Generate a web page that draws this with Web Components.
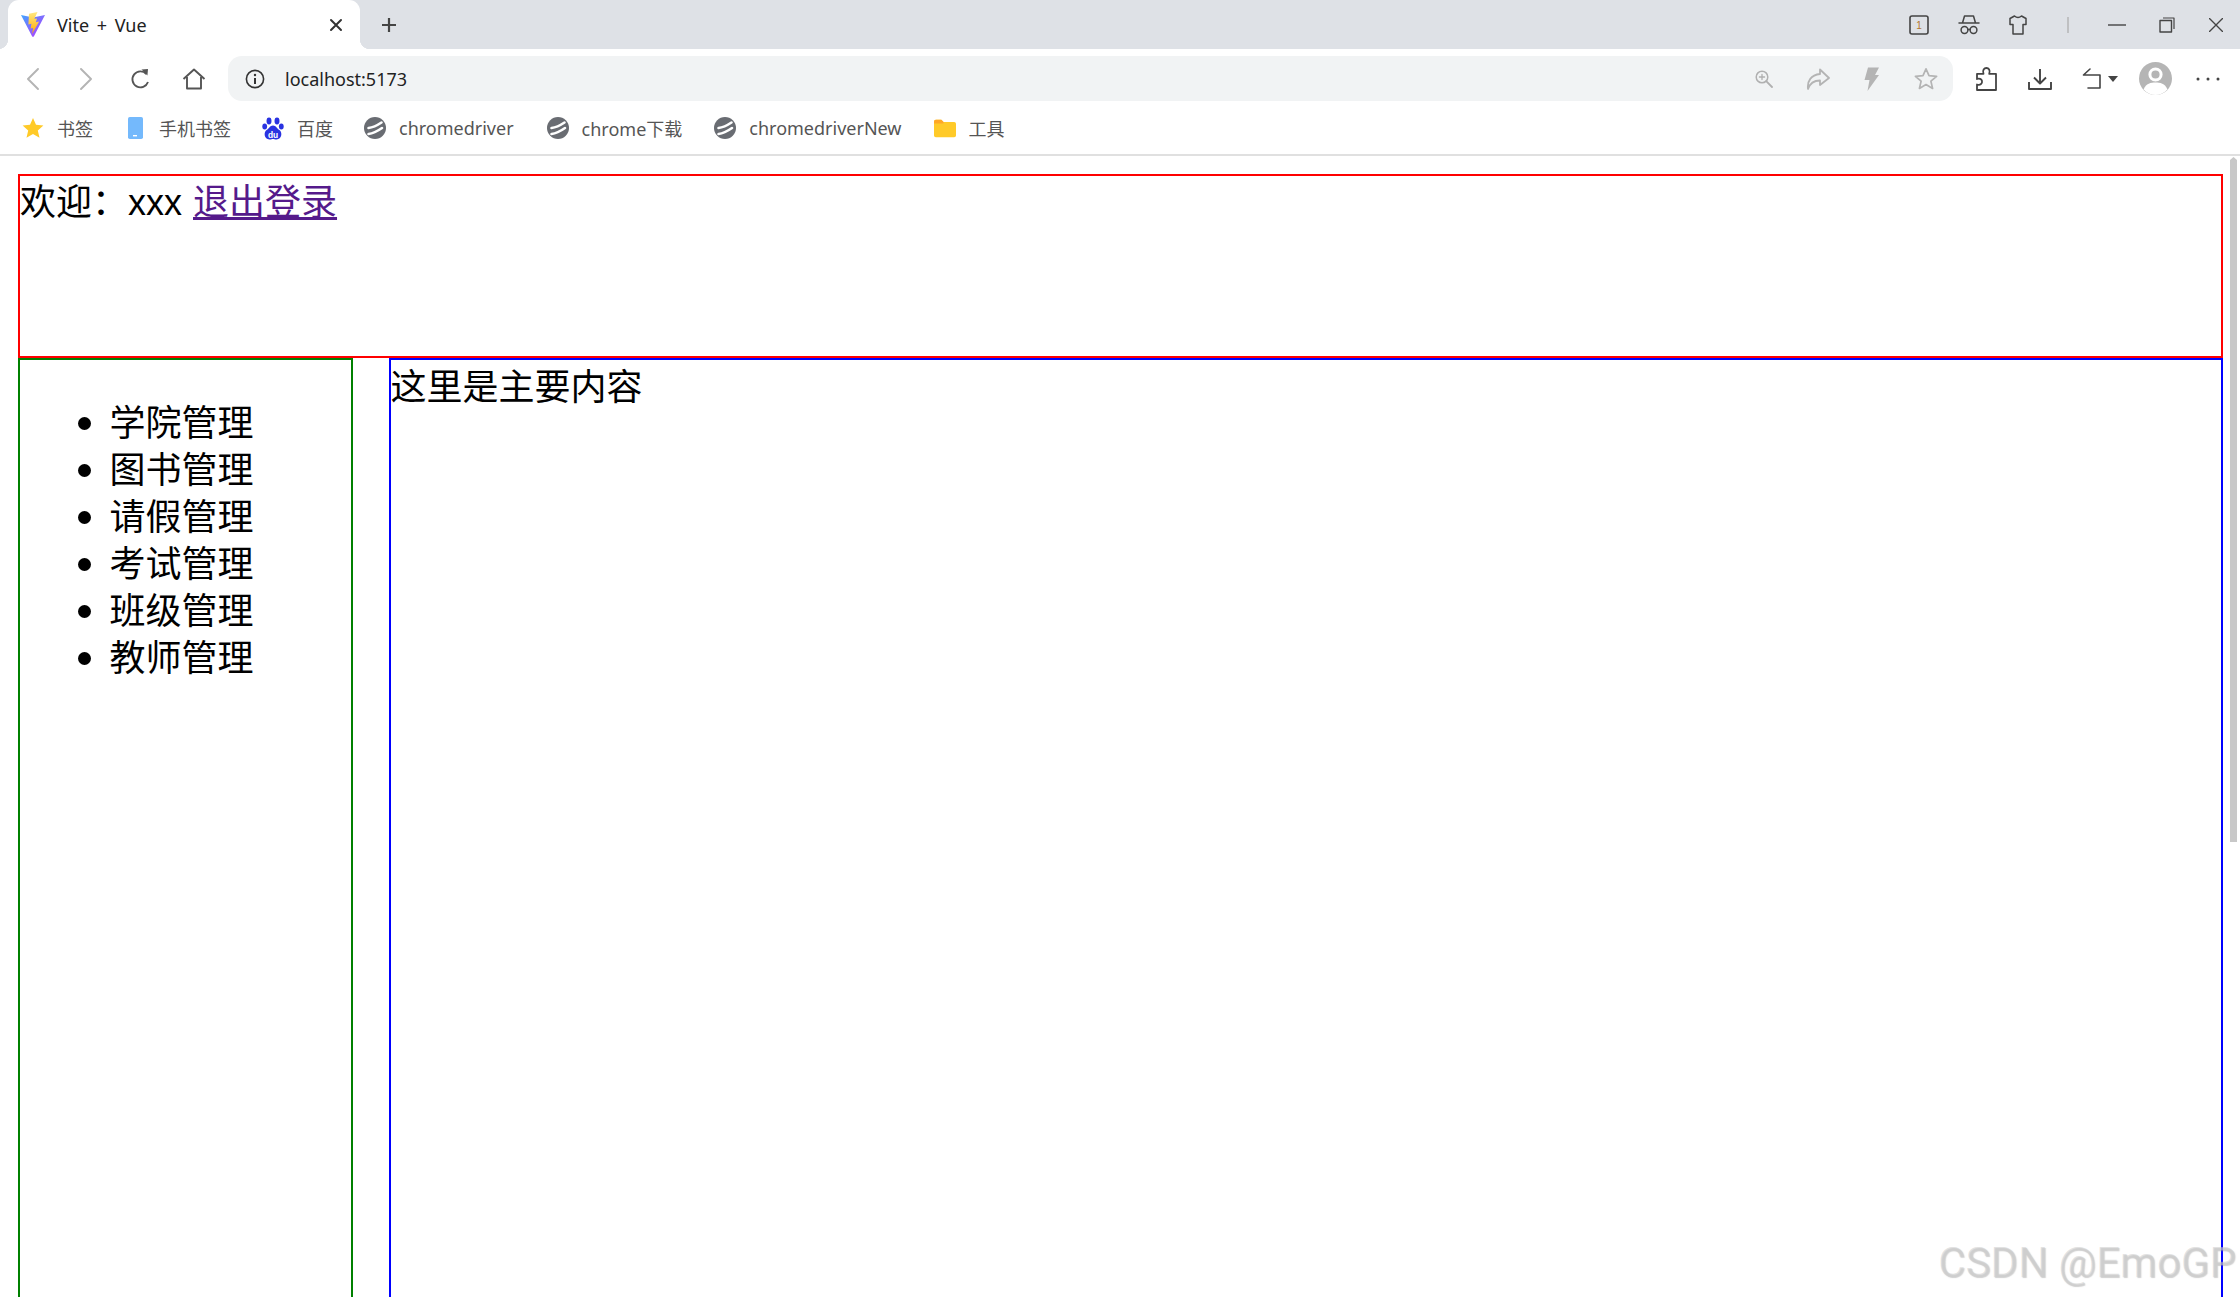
<!DOCTYPE html>
<html>
<head>
<meta charset="utf-8">
<title>Vite + Vue</title>
<style>
  html, body { margin: 0; height: 100%; overflow: hidden; background: #fff; }
  body { display: flex; flex-direction: column; font-family: "Liberation Sans", "Noto Sans CJK SC", sans-serif; }
</style>
</head>
<body>
<browser-tabs title-text="Vite + Vue"></browser-tabs>
<browser-toolbar url="localhost:5173"></browser-toolbar>
<bookmark-bar>
  <book-mark icon="star" label="书签"></book-mark>
  <book-mark icon="phone" label="手机书签"></book-mark>
  <book-mark icon="baidu" label="百度"></book-mark>
  <book-mark icon="globe" label="chromedriver"></book-mark>
  <book-mark icon="globe" label="chrome下载" style="margin-left:2px"></book-mark>
  <book-mark icon="globe" label="chromedriverNew" style="margin-left:1px"></book-mark>
  <book-mark icon="folder" label="工具" style="margin-left:1px"></book-mark>
</bookmark-bar>
<page-view>
  <page-header>欢迎：xxx <a href="#">退出登录</a></page-header>
  <side-menu>
    <li>学院管理</li>
    <li>图书管理</li>
    <li>请假管理</li>
    <li>考试管理</li>
    <li>班级管理</li>
    <li>教师管理</li>
  </side-menu>
  <main-panel>这里是主要内容</main-panel>
</page-view>
<water-mark>CSDN @EmoGP</water-mark>

<script>
const UI_FONT = `"Noto Sans", "Noto Sans CJK SC", sans-serif`;

function svg(w, h, body, vb) {
  return `<svg width="${w}" height="${h}" viewBox="${vb || `0 0 ${w} ${h}`}" fill="none" stroke-linecap="round" stroke-linejoin="round">${body}</svg>`;
}

const ICONS = {
  vite: svg(24, 25, `
    <defs>
      <linearGradient id="vg" x1="0" y1="0" x2="1" y2="1"><stop offset="0" stop-color="#41a5ff"/><stop offset="1" stop-color="#bd34fe"/></linearGradient>
      <linearGradient id="bg" x1="0" y1="0" x2="0" y2="1"><stop offset="0" stop-color="#ffea83"/><stop offset="1" stop-color="#ffa800"/></linearGradient>
    </defs>
    <path d="M0 3 L12 5.5 L24 3 L12.8 24.4 Q12 25 11.2 24.4 Z" fill="url(#vg)"/>
    <path d="M16.5 0 L8 1.8 L7.4 12.5 L10.4 11.8 L9.6 16.6 L12.2 15.9 L11 22 L18.2 9.5 L14.8 10.2 L16 6.4 L13.4 6.8 Z" fill="url(#bg)"/>`),
  close: svg(14, 14, `<path d="M2 2 L12 12 M12 2 L2 12" stroke="#333" stroke-width="2"/>`),
  plus: svg(16, 16, `<path d="M8 1 V15 M1 8 H15" stroke="#444" stroke-width="2.2" stroke-linecap="butt"/>`),
  tabcount: `<svg width="20" height="20" viewBox="0 0 20 20" fill="none"><rect x="1" y="1" width="18" height="18" rx="2" stroke="#444" stroke-width="1.6"/><text x="10" y="14" font-size="10" text-anchor="middle" fill="#b5752c" font-family="Liberation Sans">1</text></svg>`,
  spy: svg(22, 20, `<path d="M1 8 H21 M4.5 8 L6.5 1 H15.5 L17.5 8" stroke="#444" stroke-width="1.5"/><circle cx="6.5" cy="15" r="3.4" stroke="#444" stroke-width="1.5"/><circle cx="15.5" cy="15" r="3.4" stroke="#444" stroke-width="1.5"/><path d="M9.9 14.5 H12.1" stroke="#444" stroke-width="1.3"/>`),
  shirt: svg(18, 20, `<path d="M5.5 1 L1 3.5 V9.5 H4 V19 H14 V9.5 H17 V3.5 L12.5 1 Q9 4 5.5 1 Z" stroke="#444" stroke-width="1.5"/>`),
  sep: svg(2, 16, `<path d="M1 0 V16" stroke="#aaa" stroke-width="1.2" stroke-linecap="butt"/>`),
  min: svg(18, 2, `<path d="M0 1 H18" stroke="#444" stroke-width="1.4" stroke-linecap="butt"/>`),
  max: svg(16, 16, `<rect x="1" y="3.5" width="11.5" height="11.5" stroke="#444" stroke-width="1.4"/><path d="M4 1 H15 V12" stroke="#444" stroke-width="1.2" stroke-linecap="butt"/>`),
  winclose: svg(14, 14, `<path d="M0.5 0.5 L13.5 13.5 M13.5 0.5 L0.5 13.5" stroke="#444" stroke-width="1.4"/>`),
  back: svg(13, 22, `<path d="M12 1 L2 11 L12 21" stroke="#b4b4b4" stroke-width="1.9"/>`),
  forward: svg(13, 22, `<path d="M1 1 L11 11 L1 21" stroke="#b4b4b4" stroke-width="1.9"/>`),
  reload: svg(20, 22, `<path d="M16.4 6 A8 8 0 1 0 18 14" stroke="#555" stroke-width="1.9" stroke-linecap="butt"/><path d="M11.5 1.5 L18 1 L17.4 7.4 Z" fill="#555"/>`),
  home: svg(24, 22, `<path d="M1.5 11 L12 1.5 L22.5 11 M5 9 V20.5 H19 V9" stroke="#555" stroke-width="1.9" stroke-linecap="butt"/>`),
  info: svg(20, 20, `<circle cx="10" cy="10" r="8.6" stroke="#333" stroke-width="1.6"/><path d="M10 9 V15" stroke="#333" stroke-width="2" stroke-linecap="butt"/><circle cx="10" cy="6" r="1.2" fill="#333"/>`),
  zoom: svg(18, 18, `<circle cx="7" cy="7" r="5.8" stroke="#b0b0b0" stroke-width="1.5"/><path d="M4.4 7 H9.6 M7 4.4 V9.6" stroke="#b0b0b0" stroke-width="1.3"/><path d="M11.2 11.2 L17 17" stroke="#b0b0b0" stroke-width="1.8"/>`),
  share: svg(24, 22, `<path d="M14 1.5 L23 10 L14 17 V12.5 C8 12.5 4 15 2 21 C1 13 5 7 14 6 Z" stroke="#b4b4b4" stroke-width="1.8"/>`),
  bolt: svg(16, 24, `<path d="M4 0.5 H15 L11 8 H15 L3.5 24 L5.5 13 H0.5 Z" fill="#b4b4b4"/>`),
  bstar: svg(24, 23, `<path d="M12 1.8 L15 8.6 L22.6 9.3 L16.9 14.2 L18.6 21.4 L12 17.6 L5.4 21.4 L7.1 14.2 L1.4 9.3 L9 8.6 Z" stroke="#b4b4b4" stroke-width="1.7"/>`),
  puzzle: svg(21, 24, `<path d="M1 23 V17.5 C4.5 18.5 6.5 16.5 6 14 C5.6 12 3 11 1 12 V6.8 H7.5 C6.2 3 8.2 1 10.4 1 C12.6 1 14.6 3 13.2 6.8 H20 V23 Z" stroke="#444" stroke-width="1.8"/>`),
  download: svg(24, 22, `<path d="M12 1 V15 M6 9.5 L12 15.5 L18 9.5 M1 14 V21 H23 V14" stroke="#444" stroke-width="1.9" stroke-linecap="butt"/>`),
  undo: `<span style="display:inline-flex;align-items:center;gap:6px">${svg(20, 22, `<path d="M8 1 L1.5 7 H18 V20 H6" stroke="#444" stroke-width="1.6"/>`)}${svg(10, 6, `<path d="M0 0 H10 L5 6 Z" fill="#444"/>`)}</span>`,
  avatar: svg(33, 33, `<circle cx="16.5" cy="16.5" r="16.5" fill="#b5b5b5"/><circle cx="16.5" cy="12.5" r="5.6" stroke="#fff" stroke-width="3" fill="#b5b5b5"/><path d="M4.5 27.5 C7 21.5 12 20.6 16.5 20.6 C21 20.6 26 21.5 28.5 27.5 C25.5 31 21 33 16.5 33 C12 33 7.5 31 4.5 27.5 Z" fill="#fff"/>`),
  dots: svg(24, 4, `<circle cx="2" cy="2" r="1.5" fill="#444"/><circle cx="12" cy="2" r="1.5" fill="#444"/><circle cx="22" cy="2" r="1.5" fill="#444"/>`),
  star: svg(22, 22, `<path d="M11 1 L14 7.8 L21.4 8.5 L15.8 13.4 L17.5 20.7 L11 16.9 L4.5 20.7 L6.2 13.4 L0.6 8.5 L8 7.8 Z" fill="#ffca28"/>`),
  phone: svg(22, 22, `<rect x="4" y="0" width="15" height="22" rx="1.8" fill="#74b9fc"/><rect x="9" y="18" width="4" height="1.4" fill="#fff"/>`),
  baidu: svg(22, 23, `<g fill="#2932e1"><ellipse cx="7" cy="4" rx="2.5" ry="3.4"/><ellipse cx="15" cy="4" rx="2.5" ry="3.4"/><ellipse cx="2.7" cy="9.4" rx="2.4" ry="3"/><ellipse cx="19.3" cy="9.4" rx="2.4" ry="3"/><path d="M11 8.4 C14 8.4 15 11.5 17.4 13 C20.8 15.4 19.8 22.6 14.4 22.4 C12.8 22.3 12 21.9 11 21.9 C10 21.9 9.2 22.3 7.6 22.4 C2.2 22.6 1.2 15.4 4.6 13 C7 11.5 8 8.4 11 8.4 Z"/></g><text x="11" y="20.6" font-size="8.4" font-weight="700" text-anchor="middle" fill="#fff" font-family="Liberation Sans">du</text>`),
  globe: svg(22, 22, `<circle cx="11" cy="11" r="11" fill="#696c72"/><path d="M4.5 11 C9 10.5 13 8.5 17.5 5.5 M4.5 17 C9 16.5 13 14.5 18 11" stroke="#fff" stroke-width="2.6"/>`),
  folder: svg(24, 19, `<path d="M0 2 Q0 0 2 0 H8 L10.4 2.4 H22 Q24 2.4 24 4.4 V17 Q24 19 22 19 H2 Q0 19 0 17 Z" fill="#ffca28"/><path d="M0 2 Q0 0 2 0 H8 L10.4 2.4 V4 H0 Z" fill="#ffa726"/>`)
};

class BrowserTabs extends HTMLElement {
  constructor() {
    super();
    this.attachShadow({ mode: "open" });
    this.shadowRoot.innerHTML = `
      <style>
        :host { display: flex; flex: none; align-items: stretch; height: 49px; background: #dee1e6; font: 18px ${UI_FONT}; color: #222; overflow: hidden; }
        .tab { position: relative; width: 352px; margin-left: 8px; background: #fff; border-radius: 11px 11px 0 0; display: flex; align-items: center; padding: 0 17px 0 13px; box-sizing: border-box; }
        .tab::before, .tab::after { content: ""; position: absolute; bottom: 0; width: 10px; height: 10px; }
        .tab::before { left: -10px; background: radial-gradient(circle at 0 0, transparent 10px, #fff 10.5px); }
        .tab::after { right: -10px; background: radial-gradient(circle at 100% 0, transparent 10px, #fff 10.5px); }
        .favicon { display: flex; margin-right: 12px; }
        .label { flex: 1; word-spacing: 3px; }
        .x { display: flex; }
        .new { display: flex; align-items: center; margin-left: 21px; }
        .spacer { flex: 1; }
        .btn { display: flex; align-items: center; justify-content: center; width: 49.5px; }
        .btn:last-child { margin-right: -1px; }
      </style>
      <div class="tab">
        <span class="favicon">${ICONS.vite}</span>
        <span class="label">${this.getAttribute("title-text")}</span>
        <span class="x">${ICONS.close}</span>
      </div>
      <div class="new">${ICONS.plus}</div>
      <div class="spacer"></div>
      <div class="btn">${ICONS.tabcount}</div>
      <div class="btn">${ICONS.spy}</div>
      <div class="btn">${ICONS.shirt}</div>
      <div class="btn">${ICONS.sep}</div>
      <div class="btn">${ICONS.min}</div>
      <div class="btn">${ICONS.max}</div>
      <div class="btn">${ICONS.winclose}</div>
    `;
  }
}

class BrowserToolbar extends HTMLElement {
  constructor() {
    super();
    this.attachShadow({ mode: "open" });
    this.shadowRoot.innerHTML = `
      <style>
        :host { display: flex; flex: none; align-items: center; height: 59px; padding: 0 1px 0 5px; background: #fff; box-sizing: border-box; font: 18px ${UI_FONT}; color: #222; }
        .btn { display: flex; align-items: center; justify-content: center; width: 54px; flex: none; height: 45px; }
        .address { flex: 1; display: flex; align-items: center; height: 45px; margin: 0 6px 0 7px; background: #f1f3f4; border-radius: 14px; }
        .info { display: flex; margin: 0 20px 0 17px; }
        .url { flex: 1; }
        .w66 { width: 66px; }
        .w44 { width: 44px; }
        .w62 { width: 62px; }
      </style>
      <div class="btn">${ICONS.back}</div>
      <div class="btn">${ICONS.forward}</div>
      <div class="btn">${ICONS.reload}</div>
      <div class="btn">${ICONS.home}</div>
      <div class="address">
        <span class="info">${ICONS.info}</span>
        <span class="url">${this.getAttribute("url")}</span>
        <span class="btn">${ICONS.zoom}</span>
        <span class="btn">${ICONS.share}</span>
        <span class="btn">${ICONS.bolt}</span>
        <span class="btn">${ICONS.bstar}</span>
      </div>
      <div class="btn">${ICONS.puzzle}</div>
      <div class="btn">${ICONS.download}</div>
      <div class="btn w66">${ICONS.undo}</div>
      <div class="btn w44">${ICONS.avatar}</div>
      <div class="btn w62">${ICONS.dots}</div>
    `;
  }
}

class BookmarkBar extends HTMLElement {
  constructor() {
    super();
    this.attachShadow({ mode: "open" });
    this.shadowRoot.innerHTML = `
      <style>
        :host { display: flex; flex: none; align-items: center; gap: 31px; height: 48px; padding: 0 0 6px 22px; box-sizing: border-box; background: #fff; border-bottom: 2px solid #e0e0e0; }
      </style>
      <slot></slot>
    `;
  }
}

class BookMark extends HTMLElement {
  constructor() {
    super();
    this.attachShadow({ mode: "open" });
    this.shadowRoot.innerHTML = `
      <style>
        :host { display: flex; align-items: center; gap: 13px; font: 18px ${UI_FONT}; color: #555; white-space: nowrap; }
        .icon { display: flex; justify-content: center; width: 22px; }
      </style>
      <span class="icon">${ICONS[this.getAttribute("icon")]}</span>
      <span>${this.getAttribute("label")}</span>
    `;
  }
}

class PageView extends HTMLElement {
  constructor() {
    super();
    this.attachShadow({ mode: "open" });
    this.shadowRoot.innerHTML = `
      <style>
        :host { display: flex; flex: 1; min-height: 0; overflow: hidden; background: #fff; }
        .content { flex: 1; display: grid; grid-template-columns: 335px 1fr; grid-template-rows: 184px 1100px; column-gap: 36px; padding: 18px 2px 0 18px; align-content: start; min-width: 0; }
        ::slotted(page-header) { grid-column: 1 / 3; }
        .scrollbar { flex: none; width: 15px; padding: 1px 3px 0 5px; box-sizing: border-box; }
        .thumb { height: 685px; background: #c8c8c8; clip-path: polygon(0 3px, 50% 0, 100% 3px, 100% 100%, 0 100%); }
      </style>
      <div class="content"><slot></slot></div>
      <div class="scrollbar"><div class="thumb"></div></div>
    `;
  }
}

const BOX_STYLE = `font: 36px/47px "Liberation Sans", "Noto Sans CJK SC", sans-serif; color: #000; box-sizing: border-box;`;

class PageHeader extends HTMLElement {
  constructor() {
    super();
    this.attachShadow({ mode: "open" });
    this.shadowRoot.innerHTML = `
      <style>
        :host { display: block; ${BOX_STYLE} border: 2px solid #f00; padding-top: 3px; word-spacing: 1px; }
        ::slotted(a) { color: #551a8b; text-decoration: underline; }
      </style>
      <slot></slot>
    `;
  }
}

class SideMenu extends HTMLElement {
  constructor() {
    super();
    this.attachShadow({ mode: "open" });
    this.shadowRoot.innerHTML = `
      <style>
        :host { display: block; ${BOX_STYLE} border: 2px solid #008000; }
        ul { margin: 40px 0; padding-left: 89.5px; list-style: none; }
        ::slotted(li)::before { content: ""; display: inline-block; width: 13px; height: 13px; margin: 0 19px 0 -32px; border-radius: 50%; background: #000; vertical-align: 6px; }
      </style>
      <ul><slot></slot></ul>
    `;
  }
}

class MainPanel extends HTMLElement {
  constructor() {
    super();
    this.attachShadow({ mode: "open" });
    this.shadowRoot.innerHTML = `
      <style>
        :host { display: block; ${BOX_STYLE} border: 2px solid #00f; padding-top: 4px; text-indent: -0.5px; }
      </style>
      <slot></slot>
    `;
  }
}

class WaterMark extends HTMLElement {
  constructor() {
    super();
    this.attachShadow({ mode: "open" });
    this.shadowRoot.innerHTML = `
      <style>
        :host { position: absolute; right: 4px; bottom: 10px; font: 42px Roboto, sans-serif; color: rgba(205, 205, 205, .55); text-shadow: 1px 1px 1px rgba(150, 150, 150, .45); pointer-events: none; white-space: nowrap; }
      </style>
      <slot></slot>
    `;
  }
}

customElements.define("browser-tabs", BrowserTabs);
customElements.define("browser-toolbar", BrowserToolbar);
customElements.define("bookmark-bar", BookmarkBar);
customElements.define("book-mark", BookMark);
customElements.define("page-view", PageView);
customElements.define("page-header", PageHeader);
customElements.define("side-menu", SideMenu);
customElements.define("main-panel", MainPanel);
customElements.define("water-mark", WaterMark);
</script>
</body>
</html>
